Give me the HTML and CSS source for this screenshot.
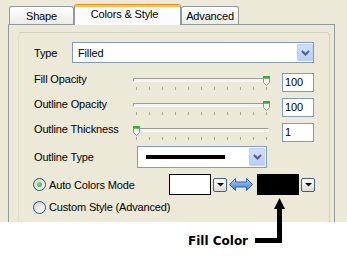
FILE: index.html
```html
<!DOCTYPE html>
<html><head>
    <meta charset="UTF-8">
    <title>Colors &amp; Style</title>
    <link rel="stylesheet" href="styles.css">
</head>
<body>
    <div class="dialog">
        <div class="tabs">
            <div class="tab tab-shape">Shape</div>
            <div class="tab tab-active">Colors &amp; Style</div>
            <div class="tab tab-advanced">Advanced</div>
        </div>
        <div class="panel">
            <div class="group">
                <div class="row row-type">
                    <span class="label label-type">Type</span>
                    <div class="select select-type">
                        <span class="select-text">Filled</span>
                        <span class="drop-btn">
                            <svg width="9" height="6" viewBox="0 0 9 6"><polyline points="1,1 4.5,4.5 8,1" fill="none" stroke="#4d6185" stroke-width="2"/></svg>
                        </span>
                    </div>
                </div>

                <div class="row row-slider first">
                    <span class="label label-slider">Fill Opacity</span>
                    <div class="slider">
                        <div class="track"></div>
                        <div class="ticks"></div>
                        <svg class="thumb thumb-max" width="7" height="10" viewBox="0 0 7 10">
                            <polygon points="0.5,2 6.5,2 6.5,6.5 3.5,9.5 0.5,6.5" fill="#f7f7f4" stroke="#7a9c7a"/>
                            <rect x="0" y="0" width="7" height="2.5" fill="#2fb12f"/>
                        </svg>
                    </div>
                    <div class="num">100</div>
                </div>

                <div class="row row-slider">
                    <span class="label label-slider">Outline Opacity</span>
                    <div class="slider">
                        <div class="track"></div>
                        <div class="ticks"></div>
                        <svg class="thumb thumb-max" width="7" height="10" viewBox="0 0 7 10">
                            <polygon points="0.5,2 6.5,2 6.5,6.5 3.5,9.5 0.5,6.5" fill="#f7f7f4" stroke="#7a9c7a"/>
                            <rect x="0" y="0" width="7" height="2.5" fill="#2fb12f"/>
                        </svg>
                    </div>
                    <div class="num">100</div>
                </div>

                <div class="row row-slider">
                    <span class="label label-slider">Outline Thickness</span>
                    <div class="slider">
                        <div class="track"></div>
                        <div class="ticks"></div>
                        <svg class="thumb thumb-min" width="7" height="10" viewBox="0 0 7 10">
                            <polygon points="0.5,2 6.5,2 6.5,6.5 3.5,9.5 0.5,6.5" fill="#f7f7f4" stroke="#7a9c7a"/>
                            <rect x="0" y="0" width="7" height="2.5" fill="#2fb12f"/>
                        </svg>
                    </div>
                    <div class="num">1</div>
                </div>

                <div class="row row-line">
                    <span class="label label-line">Outline Type</span>
                    <div class="select select-line">
                        <span class="line-sample"></span>
                        <span class="drop-btn">
                            <svg width="9" height="6" viewBox="0 0 9 6"><polyline points="1,1 4.5,4.5 8,1" fill="none" stroke="#4d6185" stroke-width="2"/></svg>
                        </span>
                    </div>
                </div>

                <div class="row row-radio">
                    <span class="radio checked"></span>
                    <span class="radio-label">Auto Colors Mode</span>
                    <div class="swatch swatch-white"></div>
                    <span class="mini-btn">
                        <svg width="7" height="4" viewBox="0 0 7 4"><polygon points="0,0 7,0 3.5,3.5" fill="#000"/></svg>
                    </span>
                    <svg class="swap-icon" width="24" height="13" viewBox="0 0 24 13">
                        <defs>
                            <linearGradient id="swapFill" x1="0" y1="0" x2="0" y2="1">
                                <stop offset="0" stop-color="#b4d0fa"/>
                                <stop offset="1" stop-color="#3f7ad8"/>
                            </linearGradient>
                        </defs>
                        <polygon points="0.5,6.5 6.5,0.5 6.5,4 17.5,4 17.5,0.5 23.5,6.5 17.5,12.5 17.5,9 6.5,9 6.5,12.5" fill="url(#swapFill)" stroke="#2f62b8"/>
                    </svg>
                    <div class="swatch swatch-black"></div>
                    <span class="mini-btn">
                        <svg width="7" height="4" viewBox="0 0 7 4"><polygon points="0,0 7,0 3.5,3.5" fill="#000"/></svg>
                    </span>
                </div>

                <div class="row row-radio second">
                    <span class="radio"></span>
                    <span class="radio-label">Custom Style (Advanced)</span>
                </div>
            </div>
        </div>
    </div>

    <div class="callout">
        <span class="callout-text">Fill Color</span>
    </div>
    <!-- pointer from the label up to the fill swatch -->
    <svg class="callout-arrow" width="32" height="48" viewBox="0 0 32 48">
        <rect x="1" y="42" width="27" height="5" fill="#000"/>
        <rect x="23" y="12" width="5" height="35" fill="#000"/>
        <polygon points="25.5,2 31,13 20,13" fill="#000"/>
    </svg>
</body>
</html>
```

FILE: styles.css
```css
body {
    margin: 0;
    position: relative;
    width: 347px;
    height: 261px;
    overflow: hidden;
    background-color: #fff;
    font-family: 'Liberation Sans', Arial, sans-serif;
    font-size: 11px;
    letter-spacing: -0.15px;
    color: #000;
}
.dialog {
    box-sizing: border-box;
    height: 222px;
    padding-top: 4px;
    overflow: hidden;
    background-color: #ece9d8;
}
.tabs {
    display: flex;
    align-items: flex-end;
    height: 20px;
    margin-left: 9px;
}
.tab {
    box-sizing: border-box;
    height: 18px;
    padding-top: 1px;
    line-height: 16px;
    text-align: center;
    border: 1px solid #919b9c;
    border-bottom: none;
    border-radius: 3px 3px 0 0;
    background: linear-gradient(#ffffff, #ecebe6);
}
.tab-shape {
    width: 65px;
}
.tab-advanced {
    width: 58px;
}
.tab-active {
    position: relative;
    z-index: 1;
    width: 107px;
    height: 21px;
    margin-bottom: -1px;
    padding: 3px 6px 0 0;
    line-height: 13px;
    border-top: 1px solid #e68b2c;
    border-radius: 3px 3px 0 0;
    background: #fcfcfe;
    box-shadow: inset 0 2px 0 #ffc83c;
}
.panel {
    box-sizing: border-box;
    width: 327px;
    height: 240px;
    margin-left: 8px;
    padding: 7px 4px 0 9px;
    border: 1px solid #919b9c;
}
.group {
    height: 230px;
    padding: 9px 0 0 15px;
    border: 1px solid #d0d0bf;
    border-left-color: #e2e0d2;
    border-radius: 4px;
}
.row {
    display: flex;
    align-items: center;
}
.row-type {
    height: 21px;
}
.label-type {
    width: 38px;
}
.select {
    box-sizing: border-box;
    display: flex;
    align-items: center;
    border: 1px solid #7f9db9;
    background: #fff;
}
.select-type {
    width: 242px;
    height: 21px;
}
.select-text {
    flex: 1;
    padding-left: 5px;
}
.drop-btn {
    display: flex;
    align-items: center;
    justify-content: center;
    width: 16px;
    height: 17px;
    border-radius: 2px;
    background: linear-gradient(#d3e0fd, #b8ccf8);
    box-shadow: inset 0 0 0 1px #bccff8;
}
.row-slider {
    height: 19px;
    align-items: flex-start;
    margin-top: 6px;
}
.row-slider.first {
    margin-top: 10px;
}
.label-slider {
    width: 99px;
    line-height: 13px;
}
.slider {
    position: relative;
    width: 136px;
    height: 19px;
}
.track {
    box-sizing: border-box;
    height: 4px;
    margin-top: 5px;
    border-top: 1px solid #9d9c99;
    border-left: 1px solid #9d9c99;
    border-bottom: 1px solid #fff;
    border-right: 1px solid #fff;
    background: #f4f3ee;
}
.ticks {
    width: 131px;
    height: 3px;
    margin: 5px 0 0 3px;
    background: repeating-linear-gradient(to right, #a3a39c 0 1px, transparent 1px 13px);
}
.thumb {
    position: absolute;
    top: 3px;
}
.thumb-min {
    left: 0;
}
.thumb-max {
    left: 130px;
}
.num {
    box-sizing: border-box;
    width: 32px;
    height: 19px;
    margin-left: 13px;
    padding-left: 2px;
    line-height: 17px;
    border: 1px solid #7f9db9;
    background: #fff;
}
.row-line {
    height: 22px;
    margin-top: 4px;
}
.label-line {
    width: 103px;
}
.select-line {
    width: 130px;
    height: 22px;
}
.line-sample {
    width: 79px;
    height: 4px;
    margin-left: 8px;
    background: #000;
}
.select-line .drop-btn {
    height: 18px;
    margin-left: auto;
    margin-right: 1px;
}
.row-radio {
    height: 21px;
    margin-top: 6px;
}
.row-radio.second {
    height: 14px;
    margin-top: 5px;
}
.radio {
    box-sizing: border-box;
    display: flex;
    align-items: center;
    justify-content: center;
    width: 13px;
    height: 13px;
    margin-left: -1px;
    border: 1px solid #1c5180;
    border-radius: 50%;
    background: linear-gradient(135deg, #d6d3c6, #ffffff);
}
.radio.checked::after {
    content: "";
    width: 5px;
    height: 5px;
    border-radius: 50%;
    background: radial-gradient(circle at 40% 40%, #8ee68e, #21a121);
}
.radio-label {
    width: 120px;
    margin-left: 3px;
    white-space: nowrap;
}
.swatch {
    box-sizing: border-box;
    width: 42px;
    height: 21px;
    border: 1px solid #000;
}
.swatch-white {
    background: #fff;
}
.swatch-black {
    margin-left: 4px;
    background: #000;
}
.mini-btn {
    box-sizing: border-box;
    display: flex;
    align-items: center;
    justify-content: center;
    width: 14px;
    height: 14px;
    margin-left: 2px;
    border: 1px solid #3e5f91;
    border-radius: 2px;
    background: linear-gradient(#ffffff, #dedcd2);
}
.swap-icon {
    margin-left: 2px;
}
.callout {
    padding: 12px 0 0 188px;
    font-family: 'DejaVu Sans', Verdana, sans-serif;
    font-size: 12px;
    font-weight: bold;
    line-height: 14px;
    letter-spacing: 0;
}
.callout-arrow {
    position: absolute;
    left: 254px;
    top: 196px;
}
```
